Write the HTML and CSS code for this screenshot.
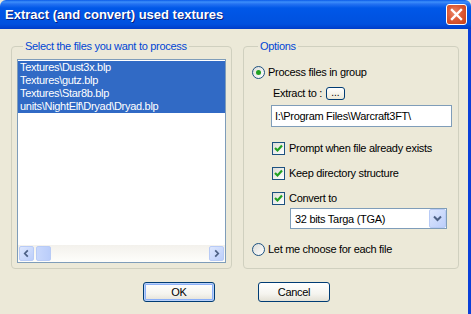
FILE: index.html
```html
<!DOCTYPE html>
<html lang="en">
<head>
    <meta charset="UTF-8">
    <title>Extract (and convert) used textures</title>
    <link rel="stylesheet" href="styles.css">
</head>
<body>
    <div class="window">
        <div class="titlebar">
            <span class="title">Extract (and convert) used textures</span>
            <span class="close">
                <svg width="13" height="13" viewBox="0 0 13 13"><path d="M2 2 L11 11 M11 2 L2 11" stroke="#fff" stroke-width="2.4" stroke-linecap="square"/></svg>
            </span>
        </div>

        <div class="client">
            <div class="groups">
                <fieldset class="group files">
                    <legend>Select the files you want to process</legend>
                    <div class="listbox">
                        <div class="items">
                            <div class="item on">Textures\Dust3x.blp</div>
                            <div class="item on">Textures\gutz.blp</div>
                            <div class="item on">Textures\Star8b.blp</div>
                            <div class="item on">units\NightElf\Dryad\Dryad.blp</div>
                        </div>
                        <div class="hscroll">
                            <span class="sbtn"><svg width="15" height="15" viewBox="0 0 15 15"><path d="M9 4 L5.5 7.5 L9 11" fill="none" stroke="#4d6185" stroke-width="2"/></svg></span>
                            <span class="thumb"></span>
                            <span class="track"></span>
                            <span class="sbtn"><svg width="15" height="15" viewBox="0 0 15 15"><path d="M6 4 L9.5 7.5 L6 11" fill="none" stroke="#4d6185" stroke-width="2"/></svg></span>
                        </div>
                    </div>
                </fieldset>

                <fieldset class="group options">
                    <legend>Options</legend>
                    <div class="row radio-row first">
                        <span class="radio checked"><span class="dot"></span></span>
                        <span>Process files in group</span>
                    </div>
                    <div class="row extract-row">
                        <span>Extract to :</span>
                        <span class="mini">...</span>
                    </div>
                    <div class="textbox">I:\Program Files\Warcraft3FT\</div>
                    <div class="row check-row">
                        <span class="check"><svg width="11" height="11" viewBox="0 0 11 11"><path d="M2 5 L4.5 7.5 L9 2.5" fill="none" stroke="#21a121" stroke-width="2.2"/></svg></span>
                        <span>Prompt when file already exists</span>
                    </div>
                    <div class="row check-row">
                        <span class="check"><svg width="11" height="11" viewBox="0 0 11 11"><path d="M2 5 L4.5 7.5 L9 2.5" fill="none" stroke="#21a121" stroke-width="2.2"/></svg></span>
                        <span>Keep directory structure</span>
                    </div>
                    <div class="row check-row">
                        <span class="check"><svg width="11" height="11" viewBox="0 0 11 11"><path d="M2 5 L4.5 7.5 L9 2.5" fill="none" stroke="#21a121" stroke-width="2.2"/></svg></span>
                        <span>Convert to</span>
                    </div>
                    <div class="combo">
                        <span class="value">32 bits Targa (TGA)</span>
                        <span class="drop"><svg width="9" height="7" viewBox="0 0 9 7"><path d="M1 1.5 L4.5 5 L8 1.5" fill="none" stroke="#4d6185" stroke-width="2"/></svg></span>
                    </div>
                    <div class="row radio-row last">
                        <span class="radio"></span>
                        <span>Let me choose for each file</span>
                    </div>
                </fieldset>
            </div>

            <div class="actions">
                <span class="btn default">OK</span>
                <span class="btn">Cancel</span>
            </div>
        </div>
    </div>
</body>
</html>
```

FILE: styles.css
```css
*{
    margin:0;
    padding:0;
    box-sizing:border-box;
}

body{
    width:471px;
    height:314px;
    overflow:hidden;
    font-family:"Liberation Sans", Arial, sans-serif;
    font-size:11px;
    letter-spacing:-0.3px;
    color:#000;
    background:#ece9d8;
}

.window{
    width:471px;
    height:314px;
    display:flex;
    flex-direction:column;
}

/* barre de titre */
.titlebar{
    height:29px;
    flex:none;
    display:flex;
    align-items:center;
    justify-content:space-between;
    padding:0 4px 0 5px;
    border-radius:6px 6px 0 0;
    background:linear-gradient(#0a5ae8 0px, #3d8ffb 2px, #2472f2 4px, #0058e8 8px, #0054e3 16px, #0051df 24px, #003dc9 29px);
}

.title{
    color:#fff;
    font-weight:bold;
    font-size:13px;
    letter-spacing:0;
    text-shadow:1px 1px 0 #0a1e7a;
}

.close{
    width:21px;
    height:21px;
    display:flex;
    align-items:center;
    justify-content:center;
    border:1px solid #fff;
    border-radius:3px;
    background:radial-gradient(circle at 40% 40%, #ec8a6c 0%, #dc5a36 45%, #c63f15 100%);
}

.client{
    flex:1;
    display:flex;
    flex-direction:column;
    padding:11px 9px 0 11px;
    border-right:3px solid #0a3fd8;
}

.groups{
    height:229px;
    display:flex;
    gap:11px;
}

.group{
    border:1px solid #d0d0bf;
    border-radius:4px;
}

.group legend{
    color:#0046d5;
    line-height:13px;
    padding:0 2px;
    margin-left:6px;
}

/* liste des fichiers */
.files{
    width:221px;
    padding:6px 5px 5px;
    display:flex;
    flex-direction:column;
}

.listbox{
    flex:1;
    display:flex;
    flex-direction:column;
    border:1px solid #7f9db9;
    background:#fff;
}

.items{
    flex:1;
    padding-top:1px;
}

.item{
    height:13px;
    line-height:13px;
    padding-left:2px;
    white-space:nowrap;
}

.item.on{
    background:#316ac5;
    color:#fff;
}

.hscroll{
    height:17px;
    display:flex;
    background:linear-gradient(#f3f1ec, #fefefb);
}

.sbtn{
    width:17px;
    height:17px;
    padding:1px;
    display:flex;
}

.sbtn svg{
    border:1px solid #b8cbf6;
    border-radius:2px;
    background:linear-gradient(135deg, #dde7fe, #bccefa);
}

.thumb{
    width:15px;
    margin:1px 0 1px 1px;
    border:1px solid #b8cbf6;
    border-radius:2px;
    background:linear-gradient(90deg, #c9d8fc, #bacdfa);
}

.track{
    flex:1;
}

/* options */
.options{
    width:216px;
    padding:0 0 0 8px;
}

.row{
    display:flex;
    align-items:center;
    height:14px;
    white-space:nowrap;
}

.radio-row.first{
    margin-top:12px;
}

.radio{
    width:13px;
    height:13px;
    margin-right:3px;
    border:1px solid #1c5180;
    border-radius:50%;
    background:linear-gradient(135deg, #dcdcd7, #fff);
    display:flex;
    align-items:center;
    justify-content:center;
}

.radio .dot{
    width:5px;
    height:5px;
    border-radius:50%;
    background:#21a121;
}

.extract-row{
    margin-top:7px;
    padding-left:21px;
}

.mini{
    width:19px;
    height:13px;
    margin-left:4px;
    border:1px solid #003c74;
    border-radius:3px;
    background:linear-gradient(#fff, #ece9d8);
    font-size:10px;
    line-height:9px;
    text-align:center;
    letter-spacing:0;
}

.textbox{
    width:181px;
    height:22px;
    margin:5px 0 0 19px;
    padding:0 3px;
    border:1px solid #7f9db9;
    background:#fff;
    line-height:20px;
    white-space:nowrap;
}

.check-row{
    margin-top:14px;
    padding-left:20px;
}

.check-row + .check-row{
    margin-top:11px;
}

.check{
    width:13px;
    height:13px;
    margin-right:4px;
    border:1px solid #1c5180;
    background:linear-gradient(135deg, #dcdcd7, #fff);
    display:flex;
    align-items:center;
    justify-content:center;
}

.combo{
    width:157px;
    height:21px;
    margin:3px 0 0 38px;
    border:1px solid #7f9db9;
    background:#fff;
    display:flex;
    align-items:center;
    justify-content:space-between;
}

.combo .value{
    padding-left:4px;
}

.drop{
    width:17px;
    height:19px;
    border:1px solid #b8cbf6;
    border-radius:2px;
    background:linear-gradient(135deg, #dde7fe, #bccefa);
    display:flex;
    align-items:center;
    justify-content:center;
}

.radio-row.last{
    margin-top:13px;
}

/* boutons */
.actions{
    display:flex;
    justify-content:center;
    gap:43px;
    margin-top:13px;
    padding-left:3px;
}

.btn{
    width:72px;
    height:20px;
    border:1px solid #003c74;
    border-radius:3px;
    background:linear-gradient(#fff 0%, #f5f4ef 60%, #e3e1d6 100%);
    text-align:center;
    line-height:18px;
}

.btn.default{
    box-shadow:inset 0 0 0 1px #b9d1fa, inset 0 0 0 2px #8cb0f8;
}
```
